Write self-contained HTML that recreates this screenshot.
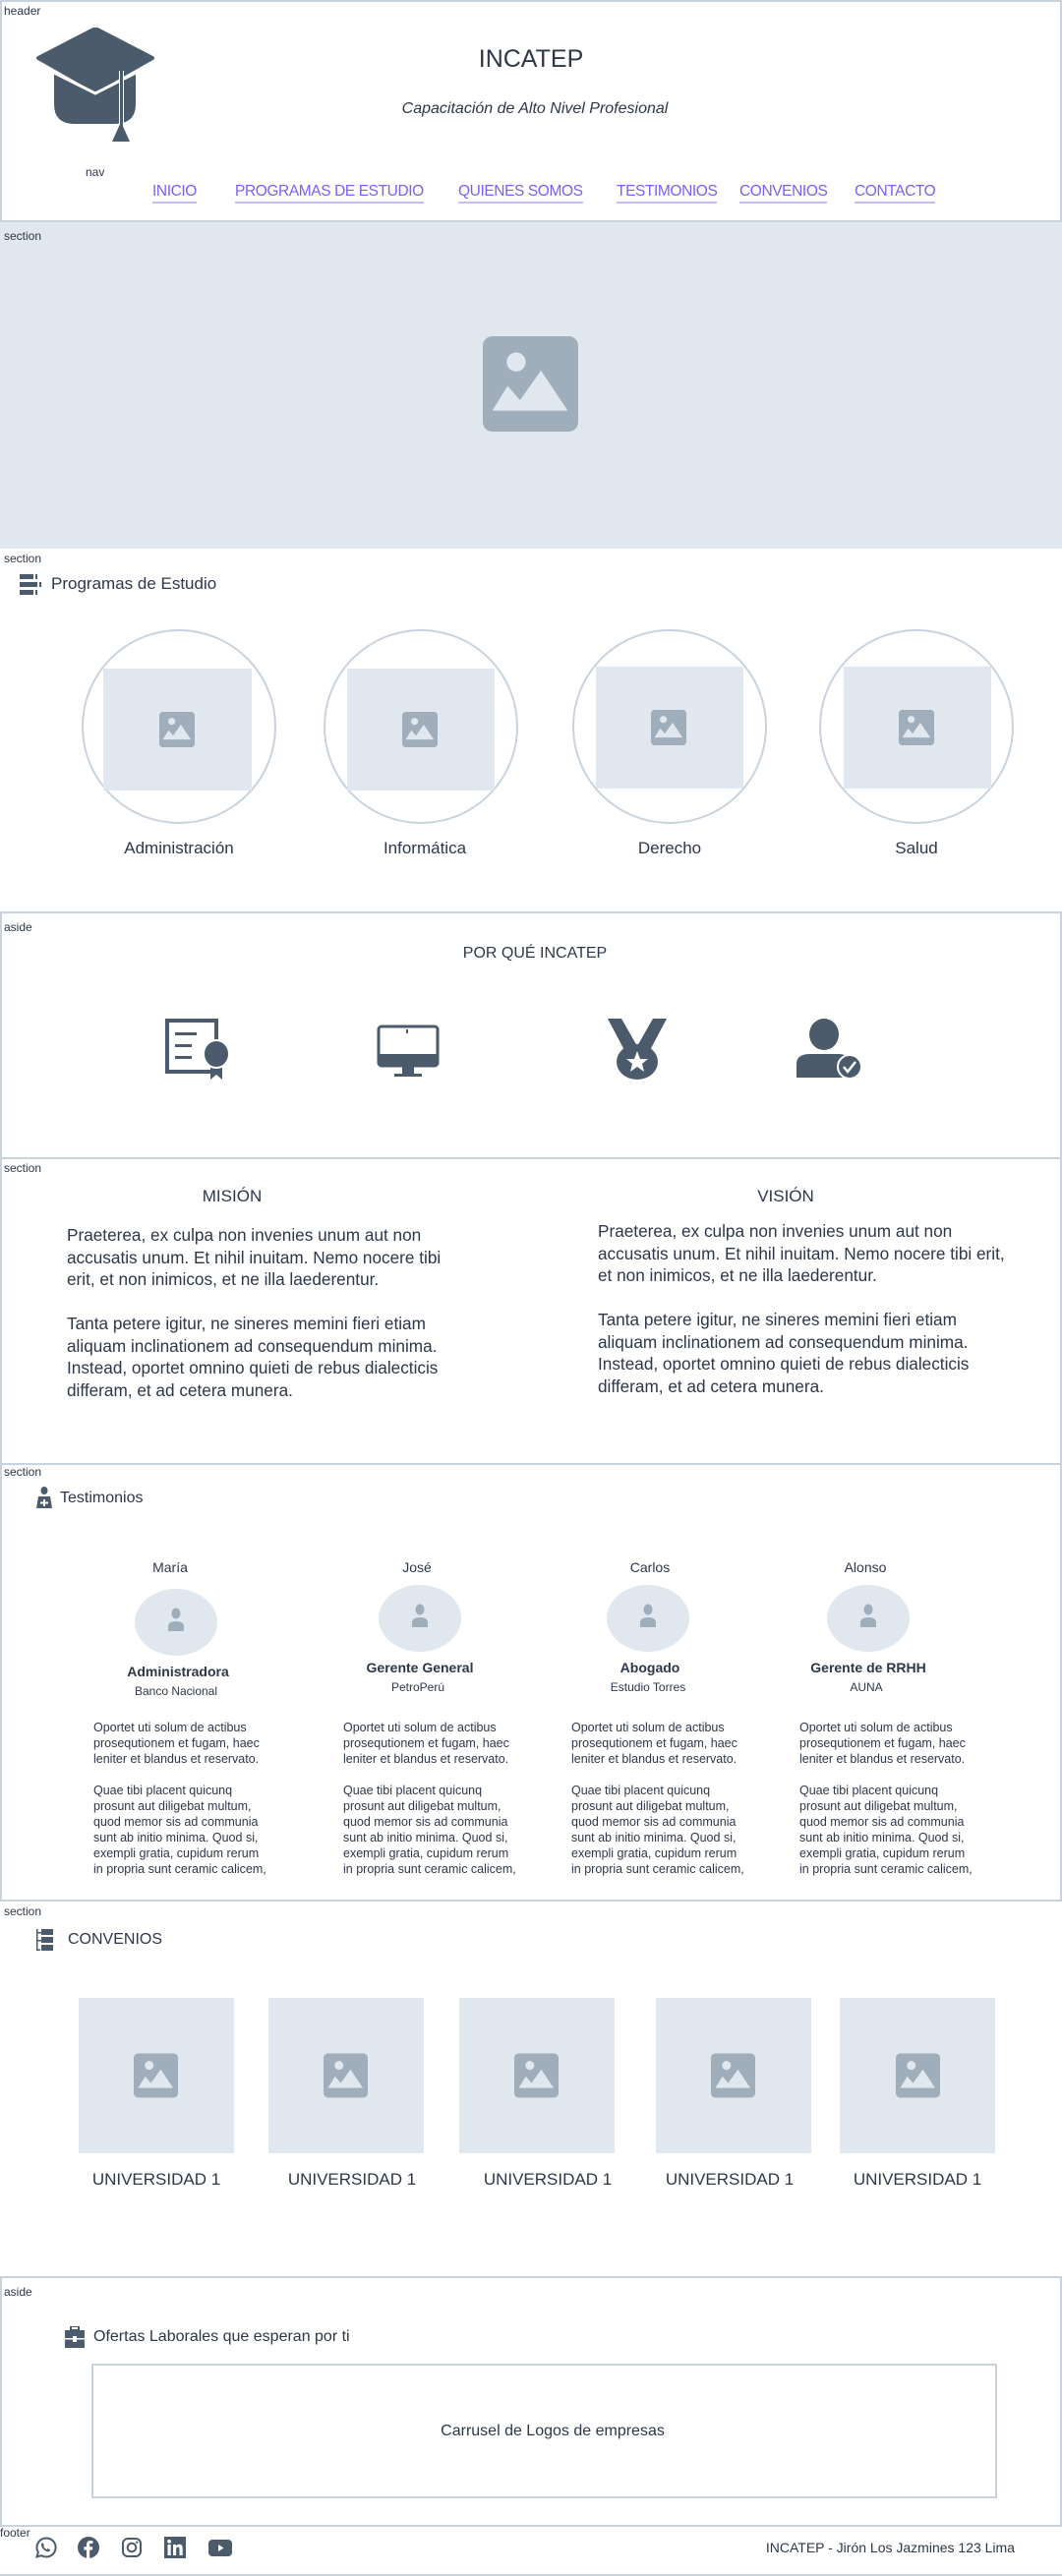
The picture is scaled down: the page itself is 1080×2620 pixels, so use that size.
<!DOCTYPE html>
<html><head><meta charset="utf-8"><style>
*{margin:0;padding:0;box-sizing:border-box}
body{width:1080px;height:2620px;position:relative;background:#fff;font-family:"Liberation Sans",sans-serif;color:#2d3748;overflow:hidden}
.a{position:absolute}
.lbl{position:absolute;font-size:12px;color:#2d3748;left:4px}
.box{position:absolute;left:0;width:1080px;border:2px solid #c8d3de}
.c{transform:translateX(-50%);white-space:nowrap}
.nav a{position:absolute;top:184px;font-size:15.5px;letter-spacing:-0.4px;color:#7860f0;text-decoration:none;border-bottom:2px solid #c4bdf7;line-height:21px;white-space:nowrap}
.ph{position:absolute;background:#e0e7ef}
.circ{position:absolute;width:198px;height:198px;border:2px solid #c8d3de;border-radius:50%;top:640px}
.p{position:absolute;font-size:17.2px;line-height:22.5px;color:#2d3748;white-space:nowrap}
.tp{position:absolute;font-size:12.5px;line-height:16px;color:#2d3748;white-space:nowrap}
.av{position:absolute;width:84px;height:68px;border-radius:50%;background:#e0e7ef}
.nm{position:absolute;font-size:14px;top:1586px;transform:translateX(-50%)}
.rl{position:absolute;font-size:14px;font-weight:bold;transform:translateX(-50%);white-space:nowrap}
.co{position:absolute;font-size:12px;transform:translateX(-50%);white-space:nowrap}
.un{position:absolute;font-size:17px;top:2207px;transform:translateX(-50%);white-space:nowrap}
</style></head><body>
<svg width="0" height="0" style="position:absolute"><defs>
<symbol id="img" viewBox="0 0 100 100"><rect x="0" y="0" width="100" height="100" rx="10" fill="#a0aebb"/><ellipse cx="35" cy="27" rx="10" ry="10" fill="#e0e7ef"/><polygon points="10,78 26,52 39,67 61,36 89,78" fill="#e0e7ef"/></symbol>
<symbol id="usr" viewBox="0 0 20 24"><ellipse cx="10" cy="6" rx="4.5" ry="5.5" fill="#a0aebb"/><path d="M2 24v-5c0-3 3-5 8-5s8 2 8 5v5z" fill="#a0aebb"/></symbol>
</defs></svg>

<!-- header -->
<div class="box" style="top:0;height:226px"></div>
<div class="lbl" style="top:4px">header</div>
<svg class="a" style="left:36px;top:28px" width="124" height="120" viewBox="0 0 124 120">
<path d="M19 46 L61 66 L102 46 L102 78 Q102 98 80 98 L40 98 Q19 98 19 78 Z" fill="#4b5b6b"/>
<path d="M3 31 L61 1 L119 31 L61 64 Z" fill="#4b5b6b" stroke="#4b5b6b" stroke-width="4" stroke-linejoin="round"/>
<path d="M19 46 L61 67 L102 46" stroke="#fff" stroke-width="3" fill="none"/>
<rect x="85" y="44" width="5" height="70" fill="#fff"/>
<rect x="86" y="44" width="3" height="66" fill="#4b5b6b"/>
<path d="M87 96 L96 116 L78 116 Z" fill="#4b5b6b"/>
</svg>
<div class="a c" style="left:540px;top:46px;font-size:25px;color:#2d3748">INCATEP</div>
<div class="a c" style="left:544px;top:102px;font-size:16px;font-style:italic">Capacitación de Alto Nivel Profesional</div>
<div class="a" style="left:87px;top:168px;font-size:12px">nav</div>
<div class="nav">
<a style="left:155px">INICIO</a>
<a style="left:239px">PROGRAMAS DE ESTUDIO</a>
<a style="left:466px">QUIENES SOMOS</a>
<a style="left:627px">TESTIMONIOS</a>
<a style="left:752px">CONVENIOS</a>
<a style="left:869px">CONTACTO</a>
</div>

<!-- hero -->
<div class="ph" style="left:0;top:226px;width:1080px;height:332px"></div>
<div class="lbl" style="top:233px">section</div>
<svg class="a" style="left:491px;top:342px" width="97" height="97"><use href="#img"/></svg>

<!-- programas -->
<div class="lbl" style="top:561px">section</div>
<svg class="a" style="left:20px;top:584px" width="22" height="22" viewBox="0 0 22 22"><rect x="0" y="0" width="14" height="5" fill="#4b5b6b"/><rect x="16" y="0" width="2" height="5" fill="#4b5b6b"/><rect x="0" y="8" width="18" height="5" fill="#4b5b6b"/><rect x="20" y="8" width="2" height="5" fill="#4b5b6b"/><rect x="0" y="16" width="14" height="5" fill="#4b5b6b"/><rect x="16" y="16" width="2" height="5" fill="#4b5b6b"/></svg>
<div class="a" style="left:52px;top:584px;font-size:17px">Programas de Estudio</div>

<div class="circ" style="left:83px"></div><div class="ph" style="left:105px;top:680px;width:151px;height:124px"></div><svg class="a" style="left:162px;top:723px" width="36" height="38"><use href="#img"/></svg>
<div class="circ" style="left:329px"></div><div class="ph" style="left:353px;top:680px;width:150px;height:124px"></div><svg class="a" style="left:409px;top:723px" width="36" height="38"><use href="#img"/></svg>
<div class="circ" style="left:582px"></div><div class="ph" style="left:606px;top:678px;width:150px;height:124px"></div><svg class="a" style="left:662px;top:721px" width="36" height="38"><use href="#img"/></svg>
<div class="circ" style="left:833px"></div><div class="ph" style="left:858px;top:678px;width:150px;height:124px"></div><svg class="a" style="left:914px;top:721px" width="36" height="38"><use href="#img"/></svg>
<div class="a c" style="left:182px;top:853px;font-size:17px">Administración</div>
<div class="a c" style="left:432px;top:853px;font-size:17px">Informática</div>
<div class="a c" style="left:681px;top:853px;font-size:17px">Derecho</div>
<div class="a c" style="left:932px;top:853px;font-size:17px">Salud</div>

<!-- por que -->
<div class="box" style="top:927px;height:252px"></div>
<div class="lbl" style="top:936px">aside</div>
<div class="a c" style="left:544px;top:961px;font-size:16px">POR QUÉ INCATEP</div>
<svg class="a" style="left:168px;top:1036px" width="68" height="62" viewBox="0 0 68 62">
<rect x="2" y="2" width="50" height="52" fill="none" stroke="#4b5b6b" stroke-width="4"/>
<rect x="10" y="14" width="22" height="3" fill="#4b5b6b"/><rect x="10" y="26" width="17" height="3" fill="#4b5b6b"/><rect x="10" y="38" width="17" height="3" fill="#4b5b6b"/>
<path d="M46 48 L46 62 L52 57 L58 62 L58 48 Z" fill="#4b5b6b"/>
<ellipse cx="52" cy="36" rx="13" ry="14" fill="#4b5b6b" stroke="#fff" stroke-width="2"/>
</svg>
<svg class="a" style="left:383px;top:1042px" width="64" height="56" viewBox="0 0 64 56">
<rect x="2" y="2" width="60" height="40" rx="3" fill="none" stroke="#4b5b6b" stroke-width="3"/>
<rect x="2" y="30" width="60" height="12" fill="#4b5b6b"/>
<rect x="30" y="5" width="2" height="4" fill="#4b5b6b"/>
<rect x="26" y="42" width="12" height="8" fill="#4b5b6b"/><rect x="18" y="50" width="28" height="3" fill="#4b5b6b"/>
</svg>
<svg class="a" style="left:616px;top:1036px" width="64" height="62" viewBox="0 0 64 62">
<path d="M2 0 L16 0 L32 28 L48 0 L62 0 L44 34 L20 34 Z" fill="#4b5b6b"/>
<ellipse cx="32" cy="44" rx="21" ry="18" fill="#4b5b6b"/>
<polygon points="32,33 35,41 43,41 37,46 39,54 32,49 25,54 27,46 21,41 29,41" fill="#fff"/>
</svg>
<svg class="a" style="left:810px;top:1036px" width="66" height="62" viewBox="0 0 66 62">
<ellipse cx="28" cy="16" rx="15" ry="16" fill="#4b5b6b"/>
<path d="M0 60 L0 46 Q0 36 14 36 L42 36 Q52 36 54 42 L54 60 Z" fill="#4b5b6b"/>
<circle cx="54" cy="49" r="12" fill="#4b5b6b" stroke="#fff" stroke-width="2"/>
<path d="M48 49 L52 54 L60 44" stroke="#fff" stroke-width="2.5" fill="none"/>
</svg>

<!-- mision -->
<div class="box" style="top:1177px;height:313px"></div>
<div class="lbl" style="top:1181px">section</div>
<div class="a c" style="left:236px;top:1207px;font-size:17px">MISIÓN</div>
<div class="a c" style="left:799px;top:1207px;font-size:17px">VISIÓN</div>
<div class="p" style="left:68px;top:1245px">Praeterea, ex culpa non invenies unum aut non<br>accusatis unum. Et nihil inuitam. Nemo nocere tibi<br>erit, et non inimicos, et ne illa laederentur.<br><br>Tanta petere igitur, ne sineres memini fieri etiam<br>aliquam inclinationem ad consequendum minima.<br>Instead, oportet omnino quieti de rebus dialecticis<br>differam, et ad cetera munera.</div>
<div class="p" style="left:608px;top:1241px">Praeterea, ex culpa non invenies unum aut non<br>accusatis unum. Et nihil inuitam. Nemo nocere tibi erit,<br>et non inimicos, et ne illa laederentur.<br><br>Tanta petere igitur, ne sineres memini fieri etiam<br>aliquam inclinationem ad consequendum minima.<br>Instead, oportet omnino quieti de rebus dialecticis<br>differam, et ad cetera munera.</div>

<!-- testimonios -->
<div class="box" style="top:1488px;height:446px"></div>
<div class="lbl" style="top:1490px">section</div>
<svg class="a" style="left:37px;top:1512px" width="16" height="22" viewBox="0 0 16 22"><ellipse cx="8" cy="4" rx="3.5" ry="4" fill="#4b5b6b"/><path d="M2 10 L14 10 L16 22 L0 22 Z" fill="#4b5b6b"/><rect x="7" y="13" width="2" height="7" fill="#fff"/><rect x="4" y="15.5" width="8" height="2" fill="#fff"/></svg>
<div class="a" style="left:61px;top:1515px;font-size:16px">Testimonios</div>

<div class="nm" style="left:173px">María</div>
<div class="nm" style="left:424px">José</div>
<div class="nm" style="left:661px">Carlos</div>
<div class="nm" style="left:880px">Alonso</div>
<div class="av" style="left:137px;top:1616px"></div><svg class="a" style="left:169px;top:1635px" width="20" height="24"><use href="#usr"/></svg>
<div class="av" style="left:385px;top:1612px"></div><svg class="a" style="left:417px;top:1631px" width="20" height="24"><use href="#usr"/></svg>
<div class="av" style="left:617px;top:1612px"></div><svg class="a" style="left:649px;top:1631px" width="20" height="24"><use href="#usr"/></svg>
<div class="av" style="left:841px;top:1612px"></div><svg class="a" style="left:873px;top:1631px" width="20" height="24"><use href="#usr"/></svg>
<div class="rl" style="left:181px;top:1692px">Administradora</div>
<div class="rl" style="left:427px;top:1688px">Gerente General</div>
<div class="rl" style="left:661px;top:1688px">Abogado</div>
<div class="rl" style="left:883px;top:1688px">Gerente de RRHH</div>
<div class="co" style="left:179px;top:1713px">Banco Nacional</div>
<div class="co" style="left:425px;top:1709px">PetroPerú</div>
<div class="co" style="left:659px;top:1709px">Estudio Torres</div>
<div class="co" style="left:881px;top:1709px">AUNA</div>
<div class="tp" style="left:95px;top:1749px">Oportet uti solum de actibus<br>prosequtionem et fugam, haec<br>leniter et blandus et reservato.<br><br>Quae tibi placent quicunq<br>prosunt aut diligebat multum,<br>quod memor sis ad communia<br>sunt ab initio minima. Quod si,<br>exempli gratia, cupidum rerum<br>in propria sunt ceramic calicem,</div>
<div class="tp" style="left:349px;top:1749px">Oportet uti solum de actibus<br>prosequtionem et fugam, haec<br>leniter et blandus et reservato.<br><br>Quae tibi placent quicunq<br>prosunt aut diligebat multum,<br>quod memor sis ad communia<br>sunt ab initio minima. Quod si,<br>exempli gratia, cupidum rerum<br>in propria sunt ceramic calicem,</div>
<div class="tp" style="left:581px;top:1749px">Oportet uti solum de actibus<br>prosequtionem et fugam, haec<br>leniter et blandus et reservato.<br><br>Quae tibi placent quicunq<br>prosunt aut diligebat multum,<br>quod memor sis ad communia<br>sunt ab initio minima. Quod si,<br>exempli gratia, cupidum rerum<br>in propria sunt ceramic calicem,</div>
<div class="tp" style="left:813px;top:1749px">Oportet uti solum de actibus<br>prosequtionem et fugam, haec<br>leniter et blandus et reservato.<br><br>Quae tibi placent quicunq<br>prosunt aut diligebat multum,<br>quod memor sis ad communia<br>sunt ab initio minima. Quod si,<br>exempli gratia, cupidum rerum<br>in propria sunt ceramic calicem,</div>

<!-- convenios -->
<div class="lbl" style="top:1937px">section</div>
<svg class="a" style="left:37px;top:1962px" width="18" height="22" viewBox="0 0 18 22"><rect x="0" y="0" width="1.5" height="22" fill="#4b5b6b"/><rect x="0" y="20.5" width="4" height="1.5" fill="#4b5b6b"/><rect x="5" y="0" width="12" height="6" fill="#4b5b6b"/><rect x="5" y="8" width="12" height="6" fill="#4b5b6b"/><rect x="5" y="16" width="12" height="6" fill="#4b5b6b"/><rect x="1" y="3" width="4" height="1.5" fill="#4b5b6b"/><rect x="1" y="11" width="4" height="1.5" fill="#4b5b6b"/></svg>
<div class="a" style="left:69px;top:1964px;font-size:16px">CONVENIOS</div>
<div class="ph" style="left:80px;top:2032px;width:158px;height:158px"></div><svg class="a" style="left:136px;top:2088px" width="45" height="46"><use href="#img"/></svg>
<div class="ph" style="left:273px;top:2032px;width:158px;height:158px"></div><svg class="a" style="left:329px;top:2088px" width="45" height="46"><use href="#img"/></svg>
<div class="ph" style="left:467px;top:2032px;width:158px;height:158px"></div><svg class="a" style="left:523px;top:2088px" width="45" height="46"><use href="#img"/></svg>
<div class="ph" style="left:667px;top:2032px;width:158px;height:158px"></div><svg class="a" style="left:723px;top:2088px" width="45" height="46"><use href="#img"/></svg>
<div class="ph" style="left:854px;top:2032px;width:158px;height:158px"></div><svg class="a" style="left:911px;top:2088px" width="45" height="46"><use href="#img"/></svg>
<div class="un" style="left:159px">UNIVERSIDAD 1</div>
<div class="un" style="left:358px">UNIVERSIDAD 1</div>
<div class="un" style="left:557px">UNIVERSIDAD 1</div>
<div class="un" style="left:742px">UNIVERSIDAD 1</div>
<div class="un" style="left:933px">UNIVERSIDAD 1</div>

<!-- ofertas -->
<div class="box" style="top:2315px;height:255px"></div>
<div class="lbl" style="top:2324px">aside</div>
<svg class="a" style="left:66px;top:2366px" width="20" height="22" viewBox="0 0 20 22"><rect x="6" y="0" width="8" height="4" fill="none" stroke="#4b5b6b" stroke-width="2"/><rect x="0" y="4" width="20" height="18" fill="#4b5b6b"/><rect x="0" y="12" width="20" height="1.5" fill="#fff"/><rect x="8" y="10" width="4" height="6" fill="#fff"/></svg>
<div class="a" style="left:95px;top:2368px;font-size:16px">Ofertas Laborales que esperan por ti</div>
<div class="a" style="left:93px;top:2404px;width:921px;height:137px;border:2px solid #c8d3de"></div>
<div class="a c" style="left:562px;top:2464px;font-size:16px">Carrusel de Logos de empresas</div>

<!-- footer -->
<div class="a" style="left:0;top:2568px;width:1080px;height:52px;border-bottom:2px solid #c8d3de"></div>
<div class="a" style="left:0;top:2569px;font-size:12px">footer</div>
<svg class="a" style="left:36px;top:2580px" width="22" height="22" viewBox="0 0 22 22"><path d="M11 1.5a9.5 9.5 0 0 0-8.2 14.3L1.5 20.5l4.8-1.3A9.5 9.5 0 1 0 11 1.5z" fill="none" stroke="#4b5b6b" stroke-width="2"/><path d="M7.5 6.5c1 0 1.5 2.5 1 3s1 2.5 3 3.5c.6-.6 1-1 1.6-.8l1.8 1c.2 1-.8 2-2 2-3 0-7-4-7-7 0-1 .8-1.7 1.6-1.7z" fill="#4b5b6b"/></svg>
<svg class="a" style="left:79px;top:2580px" width="22" height="22" viewBox="0 0 22 22"><circle cx="11" cy="11" r="11" fill="#4b5b6b"/><path d="M12.2 22V13.5h2.7l.4-3.2h-3.1V8.4c0-.9.3-1.5 1.6-1.5h1.6V4.1c-.3 0-1.3-.1-2.4-.1-2.4 0-4 1.4-4 4.1v2.2H6.4v3.2H9V22z" fill="#fff"/></svg>
<svg class="a" style="left:123px;top:2580px" width="22" height="22" viewBox="0 0 22 22"><rect x="2" y="2" width="18" height="18" rx="5" fill="none" stroke="#4b5b6b" stroke-width="2"/><circle cx="11" cy="11" r="4.3" fill="none" stroke="#4b5b6b" stroke-width="2"/><circle cx="16.2" cy="5.8" r="1.2" fill="#4b5b6b"/></svg>
<svg class="a" style="left:167px;top:2580px" width="22" height="22" viewBox="0 0 22 22"><rect x="0" y="0" width="22" height="22" fill="#4b5b6b"/><rect x="3.5" y="8" width="3.2" height="11" fill="#fff"/><circle cx="5.1" cy="4.8" r="1.9" fill="#fff"/><path d="M9 8h3v1.6c.6-1 1.7-1.9 3.4-1.9 2.6 0 3.3 1.7 3.3 4.2V19h-3.2v-6.2c0-1.3-.4-2.2-1.6-2.2s-1.8.9-1.8 2.2V19H9z" fill="#fff"/></svg>
<svg class="a" style="left:212px;top:2583px" width="24" height="17" viewBox="0 0 24 17"><rect x="0" y="0" width="24" height="17" rx="4" fill="#4b5b6b"/><path d="M10 5 L15.5 8.5 L10 12 Z" fill="#fff"/></svg>
<div class="a" style="right:48px;top:2583px;font-size:14px;white-space:nowrap">INCATEP - Jirón Los Jazmines 123 Lima</div>
</body></html>
